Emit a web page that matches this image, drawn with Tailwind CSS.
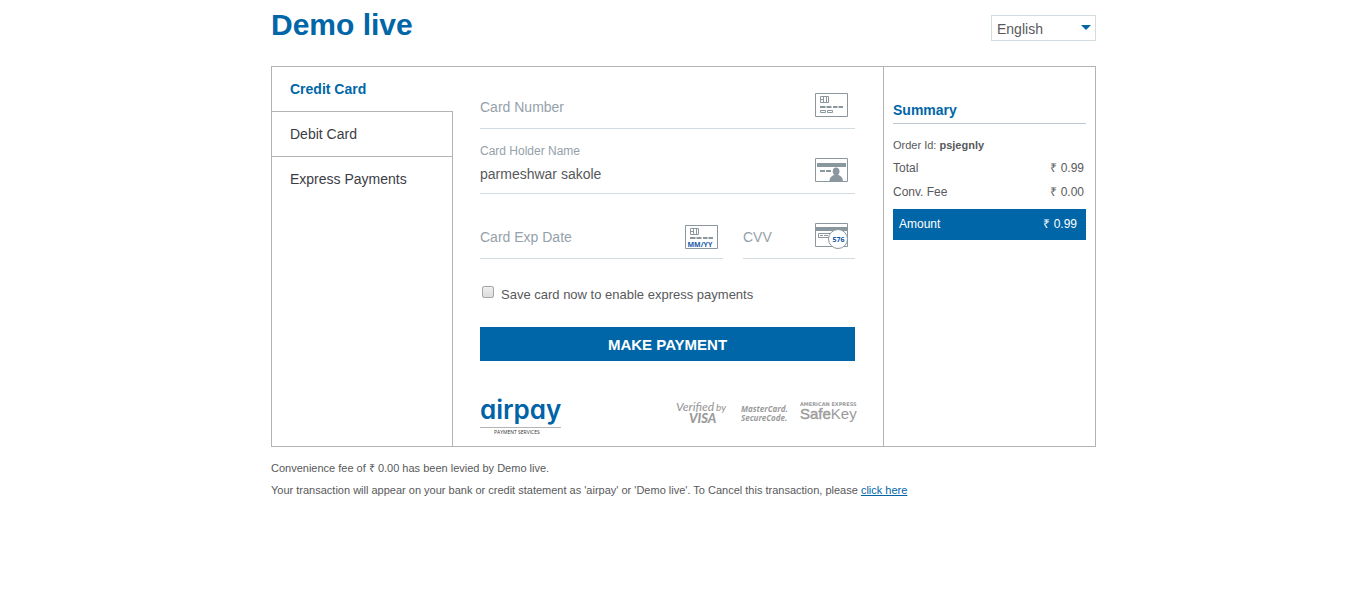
<!DOCTYPE html>
<html lang="en">
<head>
<meta charset="utf-8">
<meta name="viewport" content="width=device-width, initial-scale=1">
<title>Demo live</title>
<script src="https://cdn.jsdelivr.net/npm/@tailwindcss/browser@4"></script>
</head>
<body class="bg-white font-['Liberation_Sans',Arial,sans-serif] text-sm text-[#58595b]">
<div class="mx-auto max-w-[826px] pl-px">
  <header class="flex items-start justify-between pt-[5px]">
    <h1 class="text-[30px] leading-10 font-bold text-[#0066a8]">Demo live</h1>
    <div class="relative mt-2.5 mb-[25px]">
      <select aria-label="Language" class="block h-[26px] w-[105px] appearance-none border border-[#d0dce0] bg-white pt-0.5 pl-[5px] text-sm leading-5 text-[#58595b]"><option>English</option></select>
      <svg class="pointer-events-none absolute top-2.5 right-[5px] h-[5px] w-[10px]" viewBox="0 0 10 5" aria-hidden="true"><path d="M0 0h10L5 5z" fill="#0066a8"/></svg>
    </div>
  </header>

  <div class="flex border border-[#b2b4b6]">
    <nav class="flex w-[181px] shrink-0 flex-col leading-5 text-[#3c3c44]">
      <a href="#credit" aria-current="page" class="border-b border-[#b2b4b6] py-3 pl-[18px] font-bold text-[#0066a8]">Credit Card</a>
      <a href="#debit" class="border-r border-b border-[#b2b4b6] py-3 pl-[18px]">Debit Card</a>
      <a href="#express" class="flex-1 border-r border-[#b2b4b6] pt-3 pl-[18px]">Express Payments</a>
    </nav>

    <main class="min-w-0 flex-1 pr-7 pl-[27px]">
      <form>
        <div class="flex h-[62px] items-end border-b border-[#d0dce0] pr-[7px] pb-[11px]">
          <input type="text" aria-label="Card Number" placeholder="Card Number" class="h-5 min-w-0 flex-1 outline-none placeholder:text-[#95a1aa]">
          <svg class="h-6 w-[33px]" viewBox="0 0 33 24" fill="none" stroke="#8b979e" aria-hidden="true">
            <path d="M.5.5h32v23H.5z"/>
            <path d="M5.500 3.500h8v6h-8zM8.500 3v7M11.500 3v7M5 6.500h3"/>
            <path d="M5 14h5.500M11.500 14h5M18 14h4.500M23.500 14h4.500" stroke-width="2"/>
            <path d="M5.500 17.500h5v2h-5zM12.500 17.500h5v2h-5z"/>
          </svg>
        </div>
        <div class="flex h-[65px] items-end border-b border-[#d0dce0] pr-[7px] pb-[11px]">
          <div class="min-w-0 flex-1">
            <label for="holder" class="block h-[23px] text-xs leading-4 text-[#95a1aa]">Card Holder Name</label>
            <input id="holder" type="text" value="parmeshwar sakole" class="block h-4 w-full outline-none">
          </div>
          <svg class="h-6 w-[33px]" viewBox="0 0 33 24" aria-hidden="true">
            <path d="M.5.5h32v23H.5z" fill="none" stroke="#8b979e"/>
            <path d="M2 5h29v4H2zM5 12h5v2H5zM11 12h5v2h-5z" fill="#8b979e"/>
            <path d="M21 9.500c2.200 0 3.500 1.500 3.500 4 0 1.600-.7 2.800-1.500 3.500 3 .8 5 2.500 5 7H14.500c0-4.500 2-6.200 5-7-1-.7-1.800-1.900-1.800-3.500 0-2.500 1.300-4 3.300-4z" fill="#8b979e"/>
          </svg>
        </div>
        <div class="flex gap-5">
          <div class="flex h-[65px] min-w-0 flex-1 items-end border-b border-[#d0dce0] pr-[5px] pb-[9px]">
            <input type="text" aria-label="Card Exp Date" placeholder="Card Exp Date" class="mb-0.5 h-5 min-w-0 flex-1 outline-none placeholder:text-[#95a1aa]">
            <svg class="h-6 w-[33px]" viewBox="0 0 33 24" fill="none" stroke="#8b979e" aria-hidden="true">
              <path d="M.5.5h32v23H.5z"/>
              <path d="M5.500 3.500h8v6h-8zM8.500 3v7M11.500 3v7M5 6.500h3"/>
              <path d="M5 13h5.500M11.500 13h5M18 13h4.500M23.500 13h4.500" stroke-width="2"/>
              <text x="2.500" y="21.500" fill="#1557a5" stroke="none" font-family="Open Sans" font-weight="700" font-size="7">MM/YY</text>
            </svg>
          </div>
          <div class="flex h-[65px] w-28 shrink-0 items-end border-b border-[#d0dce0] pr-[7px] pb-[9px]">
            <input type="text" aria-label="CVV" placeholder="CVV" class="mb-0.5 h-5 min-w-0 flex-1 outline-none placeholder:text-[#95a1aa]">
            <svg class="h-[26px] w-[33px]" viewBox="0 0 33 26" fill="none" stroke="#8b979e" aria-hidden="true">
              <path d="M.5.5h32v23H.5z"/>
              <path d="M0 4h33v4H0z" fill="#8b979e" stroke="none"/>
              <path d="M3.500 10.500h13v4h-13M3.500 10.500v4M5 12.500h3M9 12.500h4"/>
              <circle cx="23" cy="16" r="9.500" fill="#fff"/>
              <text x="23.500" y="18.500" text-anchor="middle" fill="#1557a5" stroke="none" font-family="Open Sans" font-weight="700" font-size="7">576</text>
            </svg>
          </div>
        </div>
        <label class="flex items-center pt-[26px] pl-0.5 text-[13px] leading-5">
          <input type="checkbox" class="mr-[7px] mb-1.5 size-3 appearance-none rounded-[2px] border border-[#a6a6a6] bg-linear-to-b from-[#efefef] to-[#dcdcdc] checked:bg-[#0066a8]">
          Save card now to enable express payments
        </label>
        <button type="submit" class="mt-[22px] block h-[34px] w-full bg-[#0066a8] pt-0.5 text-[15px] font-bold text-white">MAKE PAYMENT</button>
      </form>

      <div class="-mr-1 mt-9 flex items-start justify-between pb-2.5">
        <svg class="h-[39px] w-[81px] overflow-visible" viewBox="0 0 81 39" role="img" aria-label="airpay payment services">
          <text x="0" y="22" fill="#0063a7" font-family="Inter" font-weight="600" font-size="26" class="[font-feature-settings:'cv11']">airpay</text>
          <path d="M0 30.500h81" stroke="#b2b4b6"/>
          <text x="14" y="37" fill="#333" font-family="Open Sans" font-size="5" font-weight="500">PAYMENT SERVICES</text>
        </svg>
        <svg class="h-[39px] w-[183px] overflow-visible" viewBox="0 0 183 39" fill="#9b9b9b" role="img" aria-label="Verified by Visa, MasterCard SecureCode, American Express SafeKey">
          <g font-family="Lato" font-style="italic">
            <text x="0" y="14" font-size="12" font-weight="500">Verified</text>
            <text x="40" y="14" font-size="10" font-weight="500">by</text>
            <text x="13" y="26" font-size="13" font-weight="900">VISA</text>
          </g>
          <g font-family="Open Sans" font-style="italic" font-weight="700" font-size="8">
            <text x="65" y="15">MasterCard.</text>
            <text x="65" y="24">SecureCode.</text>
          </g>
          <text x="124" y="9" font-family="DejaVu Sans" font-size="5" font-weight="700">AMERICAN EXPRESS</text>
          <text x="124" y="22" font-family="Liberation Sans" font-size="15"><tspan stroke="#9b9b9b" stroke-width=".4">Safe</tspan>Key</text>
        </svg>
      </div>
    </main>

    <aside class="w-[212px] shrink-0 border-l border-[#b2b4b6] pt-[33px] pr-[9px] pl-[9px] text-xs">
      <h2 class="border-b border-[#bccad0] pb-[3px] text-sm leading-5 font-bold text-[#0066a8]">Summary</h2>
      <p class="mt-[11px] mb-px text-[11px] leading-5">Order Id: <b>psjegnly</b></p>
      <dl>
        <div class="flex justify-between pr-0.5 leading-6"><dt>Total</dt><dd>₹ 0.99</dd></div>
        <div class="flex justify-between pr-0.5 leading-6"><dt>Conv. Fee</dt><dd>₹ 0.00</dd></div>
        <div class="mt-[5px] flex justify-between bg-[#0066a8] pt-[3px] pr-[9px] pb-1 pl-1.5 leading-6 text-white"><dt>Amount</dt><dd>₹ 0.99</dd></div>
      </dl>
    </aside>
  </div>

  <footer class="pt-2.5 text-[11px] leading-[22px]">
    <p>Convenience fee of ₹ 0.00 has been levied by Demo live.</p>
    <p>Your transaction will appear on your bank or credit statement as 'airpay' or 'Demo live'. To Cancel this transaction, please <a href="#cancel" class="text-[#0066a8] underline">click here</a></p>
  </footer>
</div>
</body>
</html>
